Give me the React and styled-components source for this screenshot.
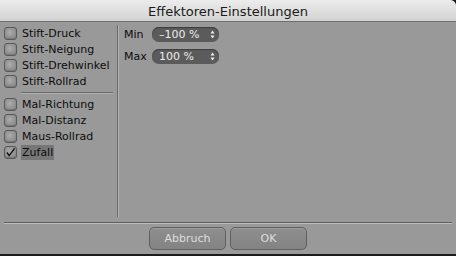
import React from 'react';
import styled, { createGlobalStyle } from 'styled-components';

const GlobalStyle = createGlobalStyle`
  body {
    margin: 0;
    background: #1b1b1b;
    font-family: "DejaVu Sans", "Liberation Sans", sans-serif;
  }
`;

const Window = styled.div`
  width: 456px;
  height: 254px;
  background: #999999;
  border-top-right-radius: 6px;
  overflow: hidden;
  display: flex;
  flex-direction: column;
`;

const TitleBar = styled.div`
  height: 21px;
  flex: none;
  background: linear-gradient(#ececec, #d2d2d2);
  border-bottom: 1px solid #6f6f6f;
  display: flex;
  align-items: center;
  justify-content: center;
  font-size: 13px;
  color: #1a1a1a;
  padding-top: 1px;
  box-sizing: border-box;
  height: 22px;
`;

const Content = styled.div`
  flex: 1;
  display: flex;
  padding: 3px 0 5px 0;
`;

const Sidebar = styled.div`
  width: 117px;
  flex: none;
  border-right: 1px solid #6a6a6a;
  box-shadow: 1px 0 0 #b2b2b2;
  display: flex;
  flex-direction: column;
`;

const Row = styled.div`
  height: 16px;
  display: flex;
  align-items: center;
  padding-left: 4px;
  gap: 4px;
  font-size: 11px;
  color: #0c0c0c;
`;

const Box = styled.span`
  width: 13px;
  height: 13px;
  border-radius: 3px;
  box-sizing: border-box;
  border: 1px solid #5a5a5a;
  background: radial-gradient(circle at 45% 40%, #acacac, #868686 85%);
  box-shadow: inset 0 -1px 1px #777;
  display: flex;
  align-items: center;
  justify-content: center;
`;

const Label = styled.span`
  padding: 1px 1px;
  background: ${(p) => (p.$focused ? '#777777' : 'transparent')};
`;

const ListRule = styled.div`
  margin: 3px 4px 2px 21px;
  border-top: 1px solid #6a6a6a;
  border-bottom: 1px solid #b0b0b0;
`;

const Panel = styled.div`
  flex: 1;
  padding: 2px 0 0 6px;
  display: flex;
  flex-direction: column;
  gap: 7px;
`;

const Field = styled.div`
  display: flex;
  align-items: center;
  font-size: 11px;
  color: #0c0c0c;
`;

const FieldLabel = styled.span`
  width: 28px;
`;

const Spinner = styled.div`
  width: 67px;
  height: 15px;
  border-radius: 7px;
  background: #5b5b5b;
  box-shadow: inset 0 1px 1px #3c3c3c;
  display: flex;
  align-items: center;
  justify-content: space-between;
  padding: 0 4px 0 7px;
  box-sizing: border-box;
  color: #ececec;
  font-size: 11px;
`;

const Footer = styled.div`
  flex: none;
  display: flex;
  flex-direction: column;
`;

const Rule = styled.div`
  margin: 0 4px;
  border-top: 1px solid #5e5e5e;
  border-bottom: 1px solid #bdbdbd;
`;

const Buttons = styled.div`
  display: flex;
  justify-content: center;
  gap: 4px;
  padding: 3px 0 4px 0;
`;

const Button = styled.button`
  width: 77px;
  height: 23px;
  border-radius: 5px;
  border: 1px solid #5f5f5f;
  background: linear-gradient(#8e8e8e, #838383);
  box-shadow: inset 0 1px 0 #9c9c9c;
  color: #dedede;
  font-family: "DejaVu Sans", "Liberation Sans", sans-serif;
  font-size: 11px;
  padding: 0;
`;

function Arrows() {
  return (
    <svg width="5" height="9" viewBox="0 0 5 9">
      <path d="M2.5 0.5 L4.5 3.5 H0.5 Z" fill="#f0f0f0" />
      <path d="M2.5 8.5 L4.5 5.5 H0.5 Z" fill="#f0f0f0" />
    </svg>
  );
}

function Check() {
  return (
    <svg width="11" height="11" viewBox="0 0 11 11">
      <path d="M2 5.5 L4.2 8.6 L9.6 1.4" stroke="#111" strokeWidth="1.4" fill="none" />
    </svg>
  );
}

const groupA = ['Stift-Druck', 'Stift-Neigung', 'Stift-Drehwinkel', 'Stift-Rollrad'];
const groupB = ['Mal-Richtung', 'Mal-Distanz', 'Maus-Rollrad'];

export default function App() {
  return (
    <>
      <GlobalStyle />
      <Window>
        <TitleBar>Effektoren-Einstellungen</TitleBar>
        <Content>
          <Sidebar>
            {groupA.map((name) => (
              <Row key={name}>
                <Box />
                <Label>{name}</Label>
              </Row>
            ))}
            <ListRule />
            {groupB.map((name) => (
              <Row key={name}>
                <Box />
                <Label>{name}</Label>
              </Row>
            ))}
            <Row>
              <Box>
                <Check />
              </Box>
              <Label $focused>Zufall</Label>
            </Row>
          </Sidebar>
          <Panel>
            <Field>
              <FieldLabel>Min</FieldLabel>
              <Spinner>
                <span>–100 %</span>
                <Arrows />
              </Spinner>
            </Field>
            <Field>
              <FieldLabel>Max</FieldLabel>
              <Spinner>
                <span>100 %</span>
                <Arrows />
              </Spinner>
            </Field>
          </Panel>
        </Content>
        <Footer>
          <Rule />
          <Buttons>
            <Button>Abbruch</Button>
            <Button>OK</Button>
          </Buttons>
        </Footer>
      </Window>
    </>
  );
}
